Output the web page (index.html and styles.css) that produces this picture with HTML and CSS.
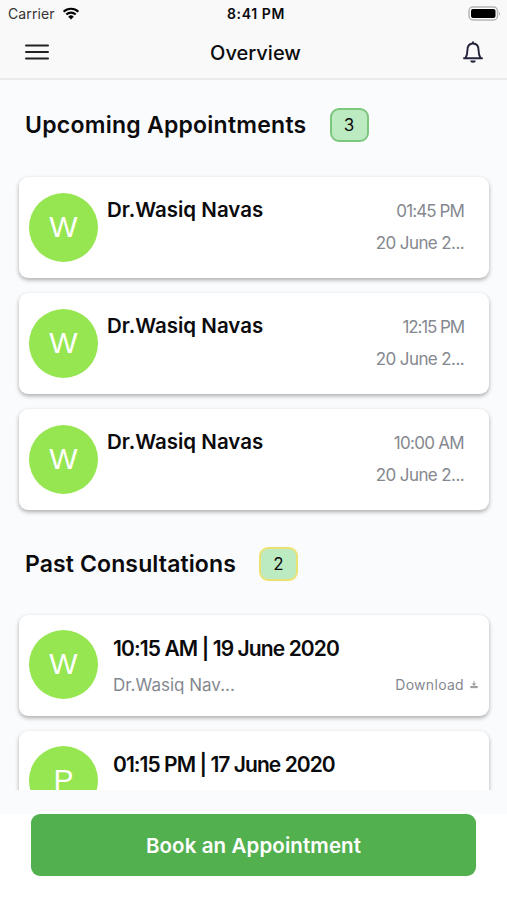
FILE: index.html
```html
<!DOCTYPE html>
<html lang="en">

<head>
    <meta charset="UTF-8">
    <meta name="viewport" content="width=device-width, initial-scale=1.0">
    <title>Overview</title>
    <link rel="stylesheet" href="styles.css">
</head>

<body>
    <header class="top">
        <div class="status-bar">
            <div class="carrier">
                <span>Carrier</span>
                <svg width="18" height="13" viewBox="0 0 18 13">
                    <path d="M1.6 4.8a10.6 10.6 0 0 1 14.8 0M4.3 7.6a6.7 6.7 0 0 1 9.4 0" fill="none" stroke="#000" stroke-width="2.1" />
                    <path d="M6.2 9.7a4 4 0 0 1 5.6 0L9 12.6z" />
                </svg>
            </div>
            <div class="clock">8:41 PM</div>
            <svg class="battery" width="33" height="16" viewBox="0 0 33 16">
                <rect x="1" y="1" width="28.500" height="13" rx="4" fill="#fff" stroke="#b5b5b5" stroke-width="1.5" />
                <rect x="3" y="3" width="24.500" height="9" rx="2" />
                <path d="M31 5.500q1.500 2 0 4z" fill="#999" />
            </svg>
        </div>
        <nav class="nav-bar">
            <svg class="menu" width="24" height="18" viewBox="0 0 24 18">
                <path d="M1 2.500h22M1 9h22M1 15.500h22" stroke="#222" stroke-width="2" stroke-linecap="round" />
            </svg>
            <h1 class="title">Overview</h1>
            <svg class="bell" width="22" height="24" viewBox="0 0 22 24">
                <path d="M2 18.200h18M3.500 18c1.400-2.200 1.900-4 1.900-7.500 0-4.200 2-7 5.600-7s5.600 2.800 5.600 7c0 3.500.5 5.300 1.900 7.500M11 3.500V2.300" fill="none" stroke="#23233c" stroke-width="1.900" stroke-linecap="round" stroke-linejoin="round" />
                <path d="M8.300 20.600h5.400a2.700 2.200 0 0 1-5.400 0z" fill="#23233c" />
            </svg>
        </nav>
    </header>

    <main class="content">
        <div class="section-head">
            <h2 class="upcoming-title">Upcoming Appointments</h2>
            <span class="count">3</span>
        </div>
        <div class="card">
            <div class="avatar">W</div>
            <div class="name">Dr.Wasiq Navas</div>
            <div class="when">
                <span class="t1">01:45 PM</span>
                <span class="date">20 June 2...</span>
            </div>
        </div>
        <div class="card">
            <div class="avatar">W</div>
            <div class="name">Dr.Wasiq Navas</div>
            <div class="when">
                <span class="t2">12:15 PM</span>
                <span class="date">20 June 2...</span>
            </div>
        </div>
        <div class="card">
            <div class="avatar">W</div>
            <div class="name">Dr.Wasiq Navas</div>
            <div class="when">
                <span class="t3">10:00 AM</span>
                <span class="date">20 June 2...</span>
            </div>
        </div>

        <div class="section-head past-head">
            <h2 class="past-title">Past Consultations</h2>
            <span class="count yellow">2</span>
        </div>
        <div class="card past">
            <div class="avatar">W</div>
            <div class="info">
                <div class="slot">10:15 AM | 19 June 2020</div>
                <div class="info-row">
                    <span class="doctor">Dr.Wasiq Nav...</span>
                    <span class="download">Download
                        <svg width="8" height="9" viewBox="0 0 8 9">
                            <path d="M4 .8v3.500M2.500 3.800L4 5.500l1.500-1.700zM.7 6v1.700h6.600V6" fill="#999" stroke="#999" stroke-width=".8" />
                        </svg>
                    </span>
                </div>
            </div>
        </div>
        <div class="card past">
            <div class="avatar">P</div>
            <div class="info">
                <div class="slot slot2">01:15 PM | 17 June 2020</div>
            </div>
        </div>
    </main>

    <footer class="bottom">
        <button class="book">Book an Appointment</button>
    </footer>
</body>

</html>
```

FILE: styles.css
```css
* {
    box-sizing: border-box;
}

body {
    margin: 0;
    height: 900px;
    display: flex;
    flex-direction: column;
    background-color: #fff;
    font-family: Inter, sans-serif;
    color: #0b0b0d;
    overflow: hidden;
}

h1,
h2 {
    margin: 0;
    font-weight: 600;
}

svg {
    flex: none;
}

.top {
    height: 80px;
    flex: none;
    background-color: #f9f9f9;
    border-bottom: 2px solid #ebebed;
}

.status-bar {
    display: grid;
    grid-template-columns: 1fr auto 1fr;
    align-items: center;
    height: 27px;
    padding: 0 6px 0 8px;
}

.carrier {
    display: flex;
    align-items: center;
    gap: 7px;
    font-size: 14px;
    letter-spacing: 0.1px;
    color: #333;
}

.clock {
    padding-left: 3px;
    font-size: 14px;
    font-weight: 600;
    letter-spacing: 0.6px;
}

.battery {
    justify-self: end;
}

.nav-bar {
    display: flex;
    align-items: center;
    justify-content: space-between;
    height: 50px;
    padding: 0 23px 0 25px;
}

.title {
    font-size: 20px;
    font-weight: 500;
    padding-top: 1px;
}

.content {
    flex: none;
    height: 710px;
    padding: 0 18px 0 19px;
    background-color: #fafbfd;
    overflow: hidden;
}

.section-head {
    display: flex;
    align-items: center;
    gap: 23px;
    height: 97px;
    padding: 0 0 7px 6px;
}

.section-head h2 {
    font-size: 23px;
}

.upcoming-title {
    letter-spacing: 0.25px;
}

.past-title {
    letter-spacing: 0.12px;
}

.past-head {
    height: 90px;
    padding-bottom: 13px;
}

.count {
    width: 39px;
    height: 34px;
    border: 2px solid #7cc67e;
    border-radius: 9px;
    background-color: #bdebc1;
    font-size: 17px;
    line-height: 30px;
    text-align: center;
}

.yellow {
    border-color: #ece274;
}

.card {
    display: flex;
    height: 101px;
    margin-bottom: 15px;
    padding: 16px 25px 0 10px;
    border-radius: 9px;
    background-color: #fff;
    box-shadow: 0 2px 4px rgba(0, 0, 0, 0.32);
}

.avatar {
    flex: none;
    width: 69px;
    height: 69px;
    border-radius: 50%;
    background-color: #95e650;
    color: #fff;
    font-family: "Liberation Sans", sans-serif;
    font-size: 30px;
    line-height: 68px;
    text-align: center;
}

.name {
    margin-left: 9px;
    font-size: 20.5px;
    font-weight: 600;
    line-height: 34px;
}

.when {
    display: flex;
    flex-direction: column;
    align-items: flex-end;
    margin: 2px 0 0 auto;
    font-size: 17px;
    line-height: 32px;
    color: #85888f;
}

.t1 {
    letter-spacing: -0.9px;
}

.t2 {
    letter-spacing: -1.1px;
}

.t3 {
    letter-spacing: -0.7px;
}

.date {
    letter-spacing: -0.6px;
}

.info {
    flex: 1;
    margin-left: 15px;
}

.past {
    padding: 15px 11px 0 10px;
}

.slot {
    padding-top: 1px;
    font-size: 21px;
    font-weight: 600;
    line-height: 36px;
    letter-spacing: -0.9px;
}

.slot2 {
    letter-spacing: -0.95px;
}

.info-row {
    display: flex;
    align-items: center;
    justify-content: space-between;
    height: 35px;
    color: #85888f;
}

.doctor {
    font-size: 17px;
}

.download {
    display: flex;
    align-items: center;
    gap: 6px;
    font-size: 14px;
    letter-spacing: 0.3px;
}

.bottom {
    flex: 1;
    padding: 24px 31px 0 31px;
    background: linear-gradient(#fafbfd 24px, #fff 24px);
}

.book {
    display: block;
    width: 100%;
    height: 62px;
    border: none;
    border-radius: 9px;
    background-color: #52b04f;
    color: #fff;
    font-family: inherit;
    font-size: 20.5px;
    font-weight: 600;
    letter-spacing: 0.1px;
}
```
